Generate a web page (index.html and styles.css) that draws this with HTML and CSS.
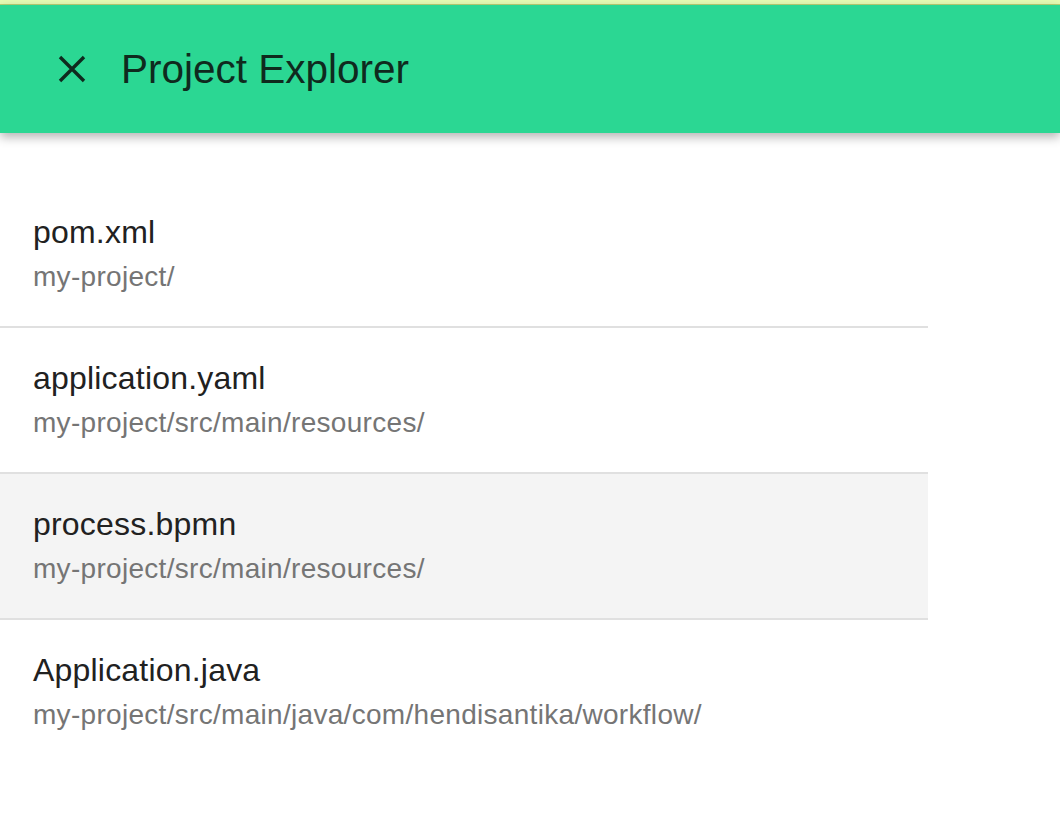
FILE: index.html
```html
<!DOCTYPE html>
<html>
<head>
<meta charset="utf-8">
<link rel="stylesheet" href="styles.css">
</head>
<body>
<div class="topstrip"></div>
<header class="appbar">
  <button class="close" aria-label="Close">
    <svg width="30" height="30" viewBox="0 0 30 30"><path d="M3 3 27 27M27 3 3 27" stroke="currentColor" stroke-width="3.4" fill="none"/></svg>
  </button>
  <h1 class="title">Project Explorer</h1>
</header>
<main class="content">
  <ul class="files">
    <li class="file">
      <div class="name">pom.xml</div>
      <div class="path">my-project/</div>
    </li>
    <li class="file">
      <div class="name">application.yaml</div>
      <div class="path">my-project/src/main/resources/</div>
    </li>
    <li class="file active">
      <div class="name">process.bpmn</div>
      <div class="path">my-project/src/main/resources/</div>
    </li>
    <li class="file">
      <div class="name">Application.java</div>
      <div class="path">my-project/src/main/java/com/hendisantika/workflow/</div>
    </li>
  </ul>
</main>
</body>
</html>
```
FILE: styles.css
```css
* { box-sizing: border-box; }
html, body { margin: 0; padding: 0; background: #fff; }
body { font-family: "Liberation Sans", Arial, sans-serif; color: #212121; }

.topstrip {
  height: 5px;
  background: #e6fcb4;
  border-bottom: 1px solid #b9d274;
}

.appbar {
  height: 128px;
  background: #2bd793;
  display: flex;
  align-items: center;
  padding-left: 57px;
  gap: 34px;
  box-shadow: 0 4px 10px rgba(0,0,0,0.3);
  position: relative;
  z-index: 1;
}
.close {
  border: 0; background: none; padding: 0; margin: 0;
  width: 30px; height: 30px; color: #0f2a1e;
  display: flex;
}
.close svg { width: 30px; height: 30px; }
.title {
  margin: 0;
  font-weight: 400;
  font-size: 40.5px;
  color: #0f2a1e;
}

.content { padding-top: 49px; }
.files { list-style: none; margin: 0; padding: 0; width: 928px; }
.file {
  padding: 32px 0 33px 33px;
  border-bottom: 2px solid #e0e0e0;
}
.file:last-child { border-bottom: 0; }
.file.active { background: #f4f4f4; }
.name { font-size: 32px; line-height: 36px; letter-spacing: 0.2px; color: #212121; }
.path { font-size: 28px; line-height: 32px; letter-spacing: 0.3px; margin-top: 11px; color: #757575; }
```
